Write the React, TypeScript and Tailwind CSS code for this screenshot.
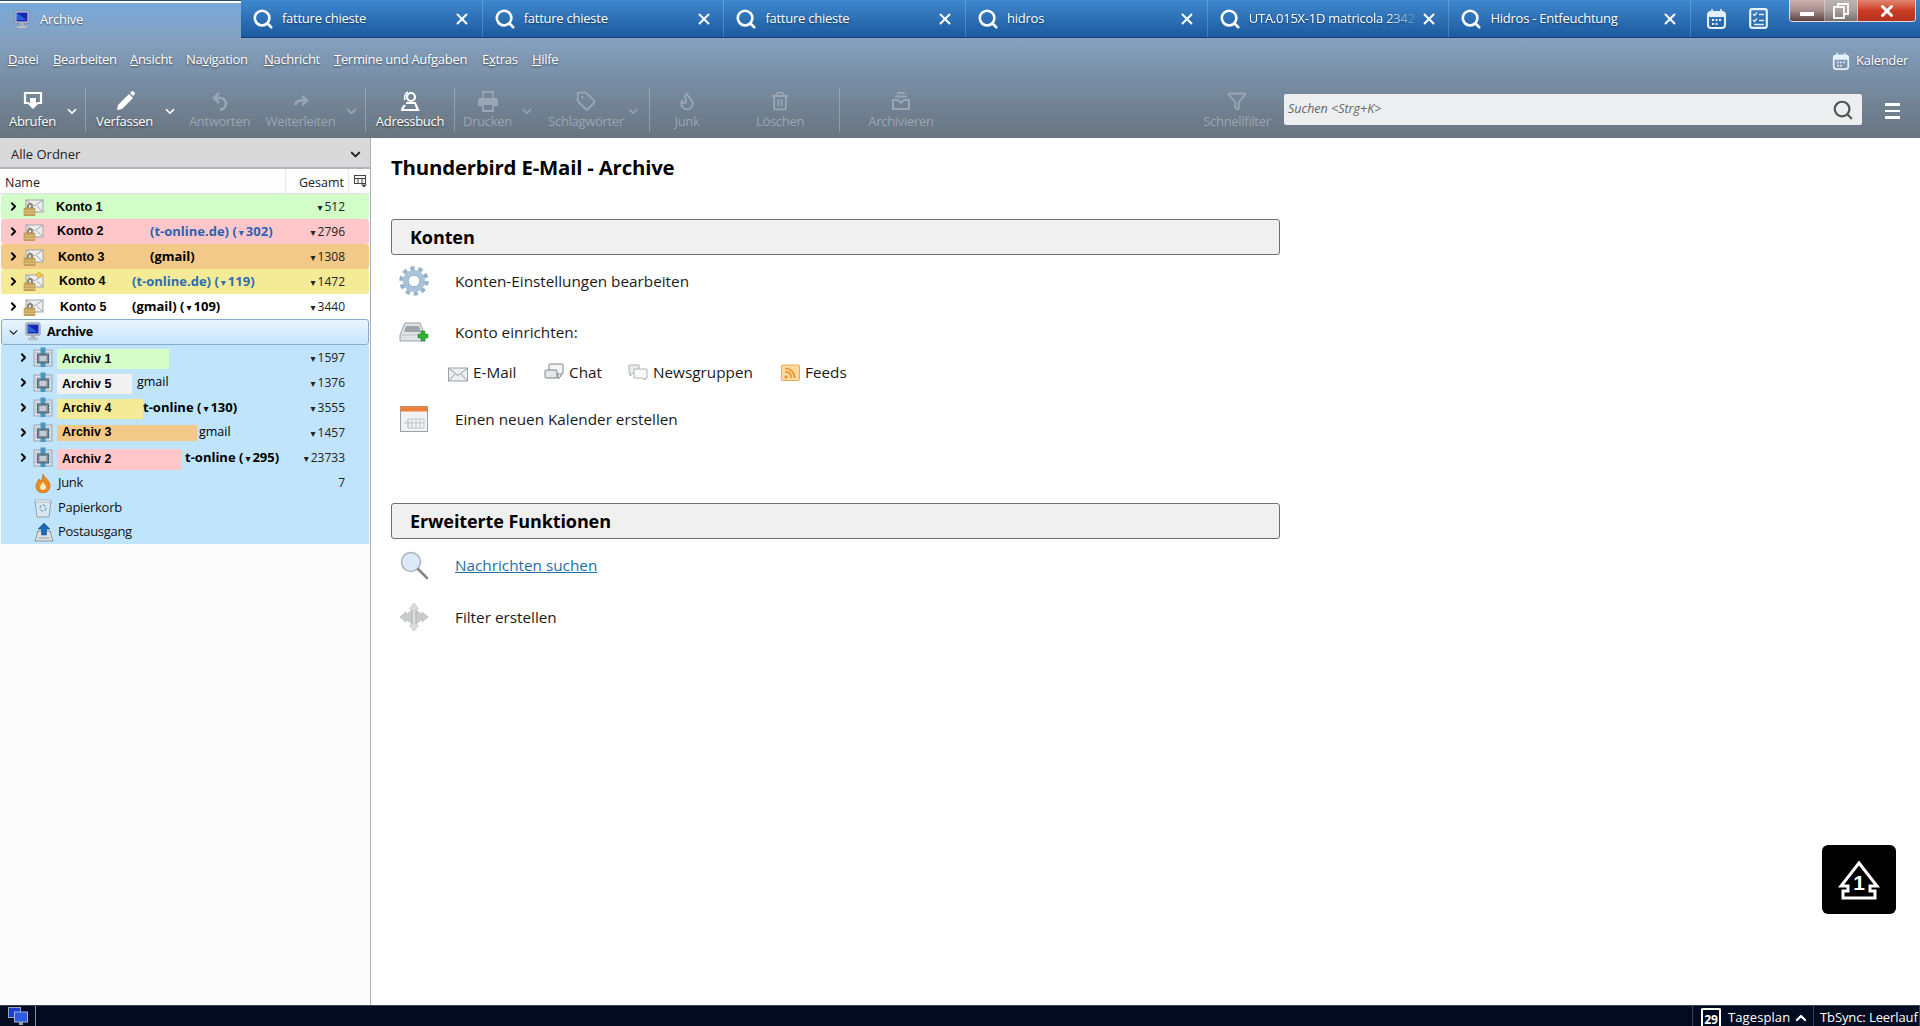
import React from "react";
import { ChevronDown, ChevronRight, ChevronUp, Flame, Funnel, Search, Tag, Trash2, X } from "lucide-react";

const shadow = "[text-shadow:0_1px_2px_rgba(0,0,0,0.55)]";

function MonitorIcon() {
  return (
    <svg width="20" height="20" viewBox="0 0 20 20" className="shrink-0">
      <rect x="3" y="1" width="14" height="12" rx="1" fill="#d5dbe6" stroke="#7b8697" />
      <rect x="4.500" y="2.500" width="11" height="9" fill="#1627b8" />
      <path d="M5 3l9 7H5z" fill="#2a63d8" />
      <rect x="8" y="13" width="4" height="3" fill="#a9afb8" />
      <rect x="5" y="16" width="10" height="2" rx="1" fill="#c3c7cc" stroke="#9aa0a8" strokeWidth="0.500" />
    </svg>
  );
}

function AccountIcon({ star }: { star?: boolean }) {
  return (
    <svg width="21" height="19" viewBox="0 0 21 19" className="shrink-0">
      <rect x="3" y="3" width="17" height="12" fill="#eceef0" stroke="#a2a6aa" />
      <path d="M3 3l8.500 6L20 3M3 15l6-6M20 15l-6-6" fill="none" stroke="#a2a6aa" />
      <path d="M4 9a3 3 0 0 1 6 0v2H8V9a1 1 0 0 0-2 0v2H4z" fill="#8f8670" />
      <rect x="1" y="11" width="11" height="8" rx="1" fill="#c9a65c" stroke="#9a7c3c" strokeWidth="0.500" />
      <path d="M1 14h11M1 16.500h11" stroke="#e2c98d" strokeWidth="0.700" />
      {star && <circle cx="16" cy="3" r="2.600" fill="#f2c94c" stroke="#d09a20" strokeWidth="0.500" />}
    </svg>
  );
}

function ArchiveFolderIcon() {
  return (
    <svg width="20" height="21" viewBox="0 0 20 21" className="shrink-0">
      <rect x="1" y="3" width="18" height="16" fill="#dde1e4" stroke="#9aa3ab" />
      <path d="M2 6h5M2 9h3M2 12h3M2 15h3M13 6h5M15 9h3M15 12h3M15 15h3" stroke="#aeb6bd" />
      <rect x="7.500" y="0.500" width="5" height="7" fill="#4a95bd" />
      <rect x="7.500" y="15" width="5" height="5" fill="#4a95bd" />
      <rect x="4.500" y="7" width="11" height="9" fill="#7d8890" stroke="#3f6f88" />
      <rect x="6.500" y="9" width="7" height="5" fill="#c4ccd2" />
    </svg>
  );
}

function JunkIcon() {
  return (
    <svg width="18" height="20" viewBox="0 0 18 20" className="shrink-0">
      <path d="M9 1c1 4 7 6 7 12a7 7 0 0 1-14 0c0-3 2-4 3-7 1 1 1 2 2 2 1-2 2-4 2-7z" fill="#ee8b1c" stroke="#b8691a" strokeWidth="0.700" />
      <path d="M9 9c1 2 3 3 3 5a3 3 0 0 1-6 0c0-2 2-3 3-5z" fill="#fde8c0" />
    </svg>
  );
}

function TrashFolderIcon() {
  return (
    <svg width="18" height="20" viewBox="0 0 18 20" className="shrink-0">
      <path d="M1 3h16l-2 16H3z" fill="#d9e7ef" stroke="#8da0ad" />
      <rect x="1" y="2" width="16" height="2" fill="#eef3f6" stroke="#8da0ad" strokeWidth="0.600" />
      <circle cx="9" cy="10" r="3" fill="none" stroke="#7eb0c8" strokeWidth="1.400" strokeDasharray="3 1.500" />
    </svg>
  );
}

function OutboxIcon() {
  return (
    <svg width="20" height="20" viewBox="0 0 20 20" className="shrink-0">
      <path d="M4 9h12l3 10H1z" fill="#dde2e7" stroke="#8b949d" />
      <path d="M5 15h10l1 2H4z" fill="#b7bfc7" />
      <path d="M10 1l6 6h-3.500v6h-5V7H4z" fill="#1c6ab8" stroke="#10497f" strokeWidth="0.500" />
    </svg>
  );
}

function TinyEnvelope() {
  return (
    <svg width="20" height="15" viewBox="0 0 20 15" className="shrink-0 mt-[4px]">
      <rect x="0.500" y="1" width="19" height="13" fill="#eceef0" stroke="#9ba0a5" />
      <path d="M1 1.500l9 7 9-7M1 13.500l6.500-7M19 13.500l-6.500-7" fill="none" stroke="#9ba0a5" />
    </svg>
  );
}

function TinyChat() {
  return (
    <svg width="20" height="18" viewBox="0 0 20 18" className="shrink-0">
      <rect x="5" y="1" width="14" height="10" rx="1" fill="#f3f4f5" stroke="#7d8388" />
      <rect x="1" y="7" width="12" height="8" rx="1" fill="#e4e6e8" stroke="#7d8388" />
      <path d="M14 11v5l3-3v-2" fill="#e4e6e8" stroke="#7d8388" />
    </svg>
  );
}

function TinyNews() {
  return (
    <svg width="20" height="18" viewBox="0 0 20 18" className="shrink-0">
      <path d="M1 2h10v8H5l-3 3v-3H1z" fill="#e9ebec" stroke="#aeb3b7" />
      <path d="M6 6h13v9h-2v2l-3-2H6z" fill="#f8f9f9" stroke="#aeb3b7" />
    </svg>
  );
}

function TinyFeed() {
  return (
    <svg width="19" height="17" viewBox="0 0 19 17" className="shrink-0">
      <rect x="0.500" y="1" width="18" height="15.500" rx="1" fill="#fbd9a2" stroke="#eba94c" />
      <circle cx="5" cy="13" r="1.600" fill="#ee8f1f" />
      <path d="M4 8a5 5 0 0 1 6 6M4 4.500a9 9 0 0 1 9.500 9.500" fill="none" stroke="#ee8f1f" strokeWidth="1.700" />
    </svg>
  );
}

function GearIcon() {
  return (
    <svg width="30" height="30" viewBox="0 0 30 30">
      <circle cx="15" cy="15" r="12.500" fill="none" stroke="#93b3cb" strokeWidth="4.500" strokeDasharray="4.200 3.650" />
      <circle cx="15" cy="15" r="8.500" fill="none" stroke="#a9c4da" strokeWidth="5" />
      <circle cx="15" cy="15" r="5.800" fill="none" stroke="#7f9db5" strokeWidth="0.800" />
    </svg>
  );
}

function NewAccountIcon() {
  return (
    <svg width="30" height="24" viewBox="0 0 30 24">
      <path d="M6 3h15l5 12v6H1v-6z" fill="#dfe3e6" stroke="#9ba2a8" />
      <path d="M7 6h13l2 6H5z" fill="#9da5ac" />
      <path d="M1 15h25" stroke="#bcc2c7" />
      <path d="M22 11h4v3h3v4h-3v3h-4v-3h-3v-4h3z" fill="#30b030" stroke="#1d8a1d" strokeWidth="0.500" />
    </svg>
  );
}

function NewCalendarIcon() {
  return (
    <svg width="28" height="26" viewBox="0 0 28 26">
      <rect x="0.500" y="0.500" width="27" height="25" fill="#f1f2f3" stroke="#9aa0a6" />
      <rect x="0.500" y="0.500" width="27" height="5" fill="#ef7f3b" />
      <path d="M8 13h16v9H8zM4 17h20M8 13v9M12 13v9M16 13v9M20 13v9" fill="none" stroke="#b5bbc1" strokeWidth="0.800" />
    </svg>
  );
}

function SearchGlassIcon() {
  return (
    <svg width="30" height="30" viewBox="0 0 30 30">
      <circle cx="12" cy="12" r="9.500" fill="#dbe9f8" stroke="#a8b2bb" strokeWidth="1.400" />
      <path d="M19 19l9 9" stroke="#7f868c" strokeWidth="2.500" strokeLinecap="round" />
    </svg>
  );
}

function FilterArrowsIcon() {
  return (
    <svg width="30" height="30" viewBox="0 0 30 30">
      <path d="M15 1l4.500 6H17v16h2.500L15 29l-4.500-6H13V7h-2.500z" fill="#dcdedc" stroke="#b4b8b4" strokeWidth="0.600" />
      <path d="M1 15l6-5v3l6-5v14l-6-5v3zM29 15l-6-5v3l-6-5v14l6-5v3z" fill="#c9ccc9" stroke="#aaaeaa" strokeWidth="0.600" />
    </svg>
  );
}

function AddressBookIcon() {
  return (
    <svg width="22" height="22" viewBox="0 0 22 22" fill="none" stroke="white" strokeWidth="2.200">
      <circle cx="12" cy="7" r="4" />
      <path d="M9 2C6 3 5 7 6 10" strokeWidth="1.500" />
      <path d="M7 13h9l3 7H3c0-2 2-3 3-5" />
    </svg>
  );
}

function FetchIcon() {
  return (
    <svg width="22" height="22" viewBox="0 0 22 22" fill="none" stroke="white" strokeWidth="2.200">
      <path d="M7 13H3V3h16v10h-4" />
      <path d="M8 8v5H5l6 6 6-6h-3V8z" fill="white" stroke="none" />
    </svg>
  );
}

function ComposeIcon() {
  return (
    <svg width="22" height="22" viewBox="0 0 22 22">
      <path d="M4 15L15 4l4 4L8 19l-5 1z" fill="white" />
      <path d="M16 3l1.500-1.500a1.500 1.500 0 0 1 2 0l1 1a1.500 1.500 0 0 1 0 2L19 6z" fill="white" />
    </svg>
  );
}

function ReplyIcon() {
  return (
    <svg width="20" height="22" viewBox="0 0 20 22" fill="none" stroke="currentColor" strokeWidth="2.600">
      <path d="M9 3L4 8l5 5" />
      <path d="M4 8h6c4 0 6 3 6 5.500S14 19 10 20" />
    </svg>
  );
}

function ForwardIcon() {
  return (
    <svg width="20" height="22" viewBox="0 0 20 22" fill="none" stroke="currentColor" strokeWidth="2.600">
      <path d="M11 6l5 4.500-5 4.500" />
      <path d="M16 10.500H10c-3 0-5 2-6 4.500" />
    </svg>
  );
}

function PrinterIcon() {
  return (
    <svg width="22" height="22" viewBox="0 0 22 22">
      <path d="M6 8V2h10v6" fill="none" stroke="currentColor" strokeWidth="1.800" />
      <path d="M3 8h16a2 2 0 0 1 2 2v6h-4v-3H5v3H1v-6a2 2 0 0 1 2-2z" fill="currentColor" />
      <path d="M6 14h10v7H6z" fill="none" stroke="currentColor" strokeWidth="1.800" />
    </svg>
  );
}

function ArchiveTrayIcon() {
  return (
    <svg width="20" height="22" viewBox="0 0 20 22" fill="none" stroke="currentColor" strokeWidth="2">
      <path d="M6 3h8M4 6.500h12" />
      <path d="M2 10h5l3 3 3-3h5v9H2z" />
    </svg>
  );
}

function TabCalendarIcon({ size = 21 }: { size?: number }) {
  return (
    <svg width={size} height={size} viewBox="0 0 21 21">
      <rect x="2" y="4" width="17" height="16" rx="3" fill="none" stroke="#e4f0fa" strokeWidth="2" />
      <path d="M2 9h17V7a3 3 0 0 0-3-3H5a3 3 0 0 0-3 3z" fill="#e4f0fa" />
      <path d="M6 1v5M15 1v5" stroke="#e4f0fa" strokeWidth="1.600" />
      <path d="M6 11h2v2H6zM9.500 11h2v2h-2zM13 11h2v2h-2zM6 15h2v2H6zM9.500 15h2v2h-2z" fill="#e4f0fa" />
    </svg>
  );
}

function TabTasksIcon() {
  return (
    <svg width="19" height="21" viewBox="0 0 19 21" fill="none" stroke="#e4f0fa">
      <rect x="1.200" y="1.200" width="16.600" height="18.600" rx="2" strokeWidth="2.200" />
      <path d="M4 6l1.500 1.500L8 4.500M4 12l1.500 1.500L8 10.500" strokeWidth="1.400" />
      <path d="M10 6.500h5M10 12.500h5M5 16.500h10" strokeWidth="1.600" />
    </svg>
  );
}

function Sep() {
  return <div className="w-px h-[44px] mt-[10px] bg-white/25 shrink-0" />;
}

function DropArrow({ off, w = "w-[14px]" }: { off?: boolean; w?: string }) {
  return (
    <div className={`${w} shrink-0 flex justify-center pt-[26px]`}>
      <ChevronDown size={15} strokeWidth={3} className={off ? "text-white/30" : "text-white"} />
    </div>
  );
}

function ToolButton({ label, w, off, children }: { label: string; w: string; off?: boolean; children: React.ReactNode }) {
  return (
    <div className={`${w} shrink-0 flex flex-col items-center pt-[12px] ${off ? "text-[#9aa6b3]" : "text-white"}`}>
      <div className="h-[22px] flex items-center">{children}</div>
      <span className={`text-[13px] leading-[16px] mt-[1px] whitespace-nowrap tracking-[-0.3px] ${off ? "" : shadow}`}>{label}</span>
    </div>
  );
}

function Tab({ title, fade }: { title: string; fade?: boolean }) {
  return (
    <div className="w-[241.7px] shrink-0 h-[37px] flex items-center pl-[11px] border-r border-white/20">
      <Search size={22} strokeWidth={2.8} className="text-white shrink-0" />
      <span
        className={`ml-[8px] w-[171px] overflow-hidden whitespace-nowrap text-[13px] tracking-[-0.25px] text-white pt-[1px] ${shadow} ${
          fade ? "[mask-image:linear-gradient(to_right,black_80%,transparent)]" : ""
        }`}
      >
        {title}
      </span>
      <X size={18} strokeWidth={2.6} className="text-white shrink-0" />
    </div>
  );
}

function Count({ n, arrow = true }: { n: string; arrow?: boolean }) {
  return (
    <span className="ml-auto pr-[24px] text-[12px] text-[#222] whitespace-nowrap">
      {arrow && <span className="text-[10px] mr-[2px] font-['DejaVu_Sans',sans-serif]">▾</span>}
      {n}
    </span>
  );
}

function Chevron() {
  return <ChevronRight size={13} strokeWidth={3.4} className="text-black shrink-0" />;
}

function Tri() {
  return <span className="text-[10px] mx-[2px] font-['DejaVu_Sans',sans-serif]">▾</span>;
}

function AccountRow({
  bg,
  name,
  nameW,
  star,
  sub,
  subColor,
  unread,
  count,
}: {
  bg: string;
  name: string;
  nameW: string;
  star?: boolean;
  sub?: string;
  subColor?: string;
  unread?: string;
  count: string;
}) {
  return (
    <div className={`h-[25px] mx-px rounded-[3px] flex items-center pl-[6px] ${bg}`}>
      <Chevron />
      <span className="ml-[3px]">
        <AccountIcon star={star} />
      </span>
      <span className={`${nameW} shrink-0 font-['Liberation_Sans',sans-serif] font-bold text-[12.500px] text-black`}>{name}</span>
      {sub && (
        <span className={`text-[13px] font-bold whitespace-nowrap ${subColor}`}>
          {sub}
          {unread && (
            <>
              {"  "}(<Tri />
              {unread})
            </>
          )}
        </span>
      )}
      <Count n={count} />
    </div>
  );
}

function ArchiveRow({
  bg,
  label,
  name,
  sub,
  unread,
  gap,
  count,
}: {
  bg: string;
  label: string;
  name: string;
  sub?: string;
  unread?: string;
  gap?: string;
  count: string;
}) {
  return (
    <div className="h-[25px] mx-px bg-[#c0e4fc] flex items-center pl-[16px]">
      <Chevron />
      <span className="ml-[3px]">
        <ArchiveFolderIcon />
      </span>
      <span className={`ml-[4px] ${label} ${bg} shrink-0 flex items-center pl-[5px] font-['Liberation_Sans',sans-serif] font-bold text-[12.500px] text-black`}>
        {name}
      </span>
      {sub && (
        <span className={`${gap} whitespace-nowrap text-[12.500px] text-black ${unread ? "font-bold text-[13px]" : ""}`}>
          {sub}
          {unread && (
            <>
              {" "}(<Tri />
              {unread})
            </>
          )}
        </span>
      )}
      <Count n={count} />
    </div>
  );
}

function PlainRow({ icon, name, count, h = "h-[25px]" }: { icon: React.ReactNode; name: string; count?: string; h?: string }) {
  return (
    <div className={`${h} mx-px bg-[#c0e4fc] flex items-center pl-[33px]`}>
      <span className="w-[24px] shrink-0 flex">{icon}</span>
      <span className="text-[13px] tracking-[-0.3px] text-[#111]">{name}</span>
      {count && <Count n={count} arrow={false} />}
    </div>
  );
}

function Sidebar() {
  return (
    <aside className="w-[371px] shrink-0 bg-[#fbfbfb] border-r border-[#a7afb7] flex flex-col">
      <div className="h-[31px] shrink-0 bg-[#d9d9d9] border-b-2 border-[#b0b6bc] flex items-center pl-[11px] pr-[7px] pt-[4px] text-[13px] text-[#222]">
        Alle Ordner
        <ChevronDown size={15} strokeWidth={3.2} className="ml-auto text-[#222]" />
      </div>
      <div className="h-[25px] shrink-0 bg-[#fdfdfd] border-b border-[#dfe3e6] flex items-center text-[12.500px] text-[#222]">
        <span className="pl-[5px] pt-[4px] w-[285px] shrink-0">Name</span>
        <span className="w-[64px] shrink-0 h-full border-x border-[#e5e7e9] flex items-center justify-end pr-[4px] pt-[4px]">Gesamt</span>
        <svg width="13" height="13" viewBox="0 0 13 13" className="ml-[5px]" fill="none" stroke="#444">
          <rect x="0.500" y="0.500" width="11" height="8" />
          <path d="M0.500 3.500h11M4 3.500v5M8 3.500v5" />
          <path d="M7 9.500h6l-3 3z" fill="#444" stroke="none" />
        </svg>
      </div>
      <AccountRow bg="bg-[#d3fdc8]" name="Konto 1" nameW="w-[0px] ml-[12px] whitespace-nowrap pt-[1px]" count="512" />
      <AccountRow bg="bg-[#ffc7c9]" name="Konto 2" nameW="w-[93px] ml-[13px]" sub="(t-online.de)" subColor="text-[#2a62b4]" unread="302" count="2796" />
      <AccountRow bg="bg-[#f3c987]" name="Konto 3" nameW="w-[92px] ml-[14px] pt-[1px]" sub="(gmail)" subColor="text-black" count="1308" />
      <AccountRow bg="bg-[#f5ea96]" star name="Konto 4" nameW="w-[73px] ml-[15px]" sub="(t-online.de)" subColor="text-[#2a6fb0]" unread="119" count="1472" />
      <AccountRow bg="bg-white" name="Konto 5" nameW="w-[72px] ml-[16px] pt-[1px]" sub="(gmail)" subColor="text-black" unread="109" count="3440" />
      <div className="h-[26px] mx-px rounded-[3px] border border-[#86abd0] bg-gradient-to-b from-[#eaf5fe] to-[#c6e4fb] flex items-center pl-[5px]">
        <ChevronDown size={13} strokeWidth={2.6} className="text-[#222] shrink-0" />
        <span className="ml-[3px]">
          <MonitorIcon />
        </span>
        <span className="ml-[4px] text-[12.500px] font-bold tracking-[-0.2px] text-black">Archive</span>
      </div>
      <ArchiveRow bg="bg-[#d4fdc8]" label="w-[112px] h-[20px] mt-[3px]" name="Archiv 1" count="1597" />
      <ArchiveRow bg="bg-[#f1f1f1]" label="w-[75px] h-[20px] mt-[3px]" name="Archiv 5" sub="gmail" gap="ml-[5px]" count="1376" />
      <ArchiveRow bg="bg-[#f5ea96]" label="w-[86px] h-[20px] mt-[2px]" name="Archiv 4" sub="t-online" unread="130" gap="ml-0" count="3555" />
      <ArchiveRow bg="bg-[#f3c987]" label="w-[140px] h-[16px] mt-0" name="Archiv 3" sub="gmail" gap="ml-[2px]" count="1457" />
      <ArchiveRow bg="bg-[#ffc7c9]" label="w-[125px] h-[21px] mt-[3px]" name="Archiv 2" sub="t-online" unread="295" gap="ml-[3px]" count="23733" />
      <PlainRow icon={<JunkIcon />} name="Junk" count="7" />
      <PlainRow icon={<TrashFolderIcon />} name="Papierkorb" />
      <PlainRow icon={<OutboxIcon />} name="Postausgang" h="h-[24px]" />
    </aside>
  );
}

function SectionHead({ title, mt }: { title: string; mt: string }) {
  return (
    <div className={`${mt} h-[36px] w-[889px] rounded-[3px] border border-[#6f6f6f] bg-[#f0f0f0] flex items-center pl-[18px] text-[18px] font-bold tracking-[-0.1px] text-black`}>
      {title}
    </div>
  );
}

function ActionRow({ icon, label, mt, link }: { icon: React.ReactNode; label: string; mt: string; link?: boolean }) {
  return (
    <div className={`${mt} h-[40px] flex items-center`}>
      <div className="w-[38px] shrink-0 flex justify-center pl-[8px]">{icon}</div>
      <span className={`ml-[26px] text-[15.300px] ${link ? "text-[#1f6ea8] underline" : "text-[#1a1a1a]"}`}>{label}</span>
    </div>
  );
}

function SetupItem({ w, icon, label }: { w: string; icon: React.ReactNode; label: string }) {
  return (
    <div className={`${w} shrink-0 flex items-center`}>
      {icon}
      <span className="ml-[5px] text-[15.300px] text-[#1a1a1a]">{label}</span>
    </div>
  );
}

export default function App() {
  return (
    <div className="h-[1026px] overflow-hidden flex flex-col font-['Open_Sans','Noto_Sans',sans-serif] relative">
      {/* tab bar */}
      <div className="h-[38px] shrink-0 flex bg-gradient-to-b from-[#3f88ce] to-[#1c5a9f] border-b border-[#143f70]">
        <div className="w-[241px] shrink-0 h-[38px] border-t-[1px] border-[#2c4f70] bg-gradient-to-b from-[#76a9da] to-[#85a2c2] flex items-center pl-[12px] relative z-10">
          <div className="absolute top-0 left-0 right-0 h-[2px] bg-white" />
          <MonitorIcon />
          <span className={`ml-[8px] text-[13px] tracking-[-0.25px] text-white ${shadow}`}>Archive</span>
        </div>
        <Tab title="fatture chieste" />
        <Tab title="fatture chieste" />
        <Tab title="fatture chieste" />
        <Tab title="hidros" />
        <Tab title="UTA.015X-1D matricola 2342" fade />
        <Tab title="Hidros - Entfeuchtung" />
        <div className="flex items-center pl-[15px] gap-[22px] h-[37px]">
          <TabCalendarIcon />
          <TabTasksIcon />
        </div>
        <div className="flex h-[22px] ml-[21px] rounded-b-[4px] border border-t-0 border-[#e6dcdc] overflow-hidden shrink-0">
          <div className="w-[35px] bg-gradient-to-b from-[#cdb3af] via-[#a58e8a] to-[#5f423f] flex items-center justify-center border-r border-white/40">
            <div className="w-[14px] h-[4px] bg-white mt-[6px]" />
          </div>
          <div className="w-[33px] bg-gradient-to-b from-[#bcb5b1] via-[#a8a09c] to-[#77706c] flex items-center justify-center border-r border-white/40">
            <svg width="16" height="16" viewBox="0 0 16 16" fill="none" stroke="white" strokeWidth="1.800">
              <rect x="1" y="4" width="10" height="11" />
              <path d="M5 4V1h10v10h-4" />
            </svg>
          </div>
          <div className="w-[57px] bg-gradient-to-b from-[#e2856f] via-[#cb3b22] to-[#b6321f] flex items-center justify-center text-white">
            <X size={18} strokeWidth={4} />
          </div>
        </div>
      </div>

      <div className="shrink-0 bg-gradient-to-b from-[#84a1c1] to-[#69747f]">
        {/* menu */}
        <div className="h-[40px] flex items-center text-[13px] text-white tracking-[-0.3px]">
          <nav className={`flex pl-[8px] pt-[3px] ${shadow}`}>
            <span className="w-[45px]"><u>D</u>atei</span>
            <span className="w-[77px]"><u>B</u>earbeiten</span>
            <span className="w-[56px]"><u>A</u>nsicht</span>
            <span className="w-[78px]">Na<u>v</u>igation</span>
            <span className="w-[70px]"><u>N</u>achricht</span>
            <span className="w-[148px]"><u>T</u>ermine und Aufgaben</span>
            <span className="w-[50px]">E<u>x</u>tras</span>
            <span><u>H</u>ilfe</span>
          </nav>
          <div className="ml-auto pr-[12px] flex items-center gap-[6px] pt-[6px]">
            <TabCalendarIcon size={18} />
            <span className={shadow}>Kalender</span>
          </div>
        </div>
        {/* toolbar */}
        <div className="h-[60px] flex">
          <ToolButton label="Abrufen" w="w-[65px]"><FetchIcon /></ToolButton>
          <DropArrow />
          <div className="w-[6px] shrink-0" />
          <Sep />
          <ToolButton label="Verfassen" w="w-[77px]"><ComposeIcon /></ToolButton>
          <DropArrow />
          <ToolButton label="Antworten" w="w-[85px]" off><ReplyIcon /></ToolButton>
          <ToolButton label="Weiterleiten" w="w-[77px]" off><ForwardIcon /></ToolButton>
          <DropArrow off w="w-[24px]" />
          <div className="w-[2px] shrink-0" />
          <Sep />
          <ToolButton label="Adressbuch" w="w-[88px]"><AddressBookIcon /></ToolButton>
          <Sep />
          <ToolButton label="Drucken" w="w-[65px]" off><PrinterIcon /></ToolButton>
          <DropArrow off />
          <div className="w-[12px] shrink-0" />
          <ToolButton label="Schlagwörter" w="w-[80px]" off><Tag size={20} strokeWidth={2.2} /></ToolButton>
          <DropArrow off />
          <div className="w-[9px] shrink-0" />
          <Sep />
          <ToolButton label="Junk" w="w-[74px]" off><Flame size={20} strokeWidth={2.2} /></ToolButton>
          <ToolButton label="Löschen" w="w-[112px]" off><Trash2 size={20} strokeWidth={2.2} /></ToolButton>
          <div className="w-[3px] shrink-0" />
          <Sep />
          <ToolButton label="Archivieren" w="w-[122px]" off><ArchiveTrayIcon /></ToolButton>
          <div className="flex-1" />
          <ToolButton label="Schnellfilter" w="w-[76px]" off><Funnel size={20} strokeWidth={2.2} /></ToolButton>
          <div className="w-[9px] shrink-0" />
          <div className="w-[578px] h-[31px] mt-[16px] shrink-0 rounded-[2px] bg-[#eceef0] flex items-center pl-[4px] pr-[8px] text-[12.500px] italic text-[#666]">
            Suchen &lt;Strg+K&gt;
            <Search size={22} strokeWidth={2.4} className="ml-auto text-[#555]" />
          </div>
          <div className="w-[58px] shrink-0 flex flex-col gap-[4px] items-center pt-[25px] pl-[3px]">
            <div className="w-[15px] h-[2.500px] bg-white" />
            <div className="w-[15px] h-[2.500px] bg-white" />
            <div className="w-[15px] h-[2.500px] bg-white" />
          </div>
        </div>
      </div>

      <div className="flex-1 min-h-0 flex">
        <Sidebar />
        <main className="flex-1 bg-white pl-[20px]">
          <h1 className="mt-[15px] h-[28px] leading-[28px] text-[20.400px] font-bold tracking-[-0.2px] text-black">Thunderbird E-Mail - Archive</h1>
          <SectionHead title="Konten" mt="mt-[38px]" />
          <ActionRow mt="mt-[6px]" label="Konten-Einstellungen bearbeiten" icon={<GearIcon />} />
          <ActionRow mt="mt-[11px]" label="Konto einrichten:" icon={<NewAccountIcon />} />
          <div className="mt-[8px] h-[24px] flex pl-[57px]">
            <SetupItem w="w-[96px]" icon={<TinyEnvelope />} label="E-Mail" />
            <SetupItem w="w-[84px]" icon={<TinyChat />} label="Chat" />
            <SetupItem w="w-[153px]" icon={<TinyNews />} label="Newsgruppen" />
            <SetupItem w="w-[70px]" icon={<TinyFeed />} label="Feeds" />
          </div>
          <ActionRow mt="mt-[15px]" label="Einen neuen Kalender erstellen" icon={<NewCalendarIcon />} />
          <SectionHead title="Erweiterte Funktionen" mt="mt-[64px]" />
          <ActionRow mt="mt-[6px]" label="Nachrichten suchen" link icon={<SearchGlassIcon />} />
          <ActionRow mt="mt-[12px]" label="Filter erstellen" icon={<FilterArrowsIcon />} />
        </main>
      </div>

      {/* status bar */}
      <div className="h-[21px] shrink-0 bg-[#020b1f] border-t border-[#39424f] flex text-white text-[13px]">
        <div className="w-[36px] shrink-0 border-r border-[#8a919b] pl-[8px] pt-[1px]">
          <svg width="20" height="18" viewBox="0 0 20 18">
            <rect x="0.500" y="0.500" width="12" height="10" fill="#1d3fd0" stroke="#8fa6c8" />
            <rect x="6.500" y="5" width="13" height="10" fill="#2b5be0" stroke="#9fb6d8" />
            <rect x="11" y="15" width="4" height="3" fill="#9aa0a8" />
          </svg>
        </div>
        <div className="flex-1" />
        <div className="w-[122px] shrink-0 border-x border-[#39424f] flex items-center pl-[8px] pt-[4px]">
          <span className="relative w-[20px] h-[20px] shrink-0 border-x-2 border-t-2 border-white rounded-[2px] text-[12px] font-bold leading-[20px] text-center">29</span>
          <span className="ml-[7px] whitespace-nowrap tracking-[0.1px]">Tagesplan</span>
          <ChevronUp size={16} strokeWidth={3.4} className="ml-[3px] shrink-0" />
        </div>
        <div className="w-[106px] shrink-0 border-r border-[#39424f] flex items-center pl-[6px] pt-[4px] whitespace-nowrap tracking-[-0.1px]">TbSync: Leerlauf</div>
      </div>

      {/* floating update badge */}
      <div className="absolute left-[1822px] top-[845px] w-[74px] h-[69px] rounded-[6px] bg-black flex items-center justify-center">
        <svg width="42" height="40" viewBox="0 0 42 40" fill="none" stroke="white" strokeWidth="3">
          <path d="M21 3L3 26h7v5H5v7h32v-7h-5v-5h7z" />
          <text x="21" y="30" fontSize="21" fontWeight="700" fill="white" stroke="none" textAnchor="middle" fontFamily="Liberation Sans, sans-serif">1</text>
        </svg>
      </div>
    </div>
  );
}
